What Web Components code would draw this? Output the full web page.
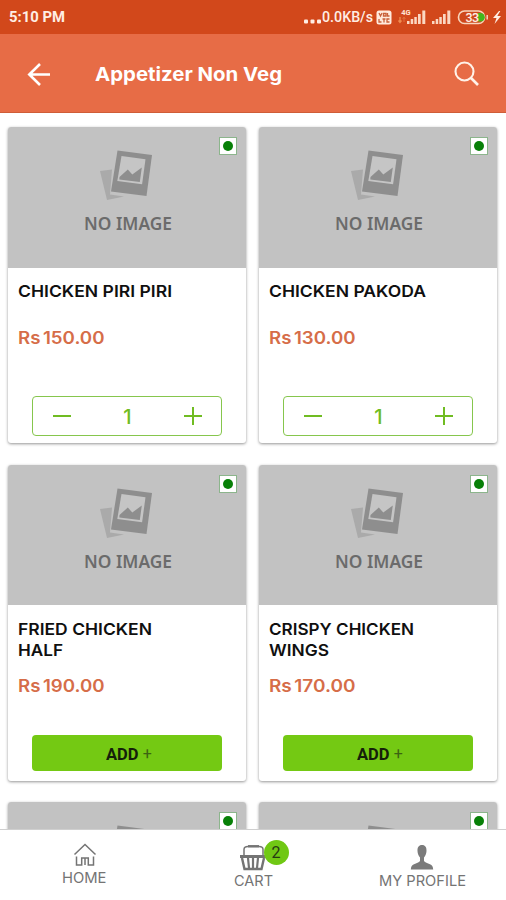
<!DOCTYPE html>
<html lang="en">
<head>
<meta charset="utf-8">
<title>Appetizer Non Veg</title>
<style>
html,body{margin:0;height:100%;overflow:hidden;background:#fff}
</style>
</head>
<body>
<menu-app></menu-app>
<script>
const define = (name, html, setup) => customElements.define(name, class extends HTMLElement {
  connectedCallback() {
    if (this.shadowRoot) return;
    const t = document.createElement('template');
    t.innerHTML = typeof html === 'function' ? html(this) : html;
    this.attachShadow({ mode: 'open' }).append(t.content.cloneNode(true));
    if (setup) setup(this);
  }
});

// A line of text widened or narrowed so that it spans the given width.
define('fit-text', `<style>:host{display:inline-block;white-space:nowrap}span{display:inline-block;transform-origin:0 50%}</style><span></span>`, el => {
  const s = el.shadowRoot.querySelector('span'), w = +el.getAttribute('w');
  s.textContent = el.getAttribute('text');
  const n = s.getBoundingClientRect().width;
  s.style.transform = `scaleX(${w / n})`;
  s.style.marginRight = (w - n) + 'px';
});

define('status-bar', `<style>
:host{display:flex;height:34px;background:#d2481b;color:#ffeee4;align-items:center;font:700 14.5px/34px Roboto,sans-serif;padding:2px 0 0 9px;box-sizing:border-box}
.sp{flex:1}svg{display:block;flex:none}
</style>
<fit-text w="56" text="5:10 PM"></fit-text><span class="sp"></span>
<svg width="18" height="34"><g fill="#ffeee4"><rect x="0" y="18.500" width="4" height="4" rx="1"/><rect x="6.500" y="18.500" width="4" height="4" rx="1"/><rect x="13" y="18.500" width="4" height="4" rx="1"/></g></svg>
<fit-text w="51" style="font-weight:500;margin:0 2px 0 0" text="0.0KB/s"></fit-text>
<svg width="131" height="34" viewBox="375 1 131 34">
<rect x="376.500" y="10.500" width="15" height="14" rx="2.500" fill="#ffeadd"/>
<g stroke="#c9603a" stroke-width="1.300" fill="none" transform="translate(0 .5)"><path d="M379 12.500l1.500 3 1.500-3M383.500 13h2.500v2.500h-2.500zM387.500 12.500v3h2M379 18.500v3h2.500M382.500 18.500h3M384 18.500v3.500M389.500 18.500h-2.500v3h2.500"/></g>
<text x="401.300" y="15" font-size="7.500" font-weight="700" fill="#ffe2d2">4G</text>
<path d="M400 17v5M398.500 20.500l1.500 2 1.500-2" stroke="#ef8c50" fill="none" stroke-width="1.300"/><path d="M404 22v-4M402.700 19l1.300-2 1.300 2" stroke="#e0703f" fill="none"/>
<g fill="#fbd8c2"><path d="M407 21h2.500v3H407zM410.700 19h2.500v5h-2.500zM414.300 17h2.500v7h-2.500zM418 14h2.700v10H418zM422.300 10.500h3V24h-3z"/><path d="M432 21h2.500v3H432zM435.700 19h2.500v5h-2.500zM439.300 17h2.500v7h-2.500zM443 14h2.700v10H443zM447.300 10.500h3V24h-3z"/></g>
<rect x="458.500" y="11" width="26" height="12.500" rx="6" fill="#cf481b" stroke="#f8d5bd" stroke-width="1.600"/><path d="M478 13h2.500a4.300 4.300 0 0 1 0 8.600H478z" fill="#43b61b"/><path d="M487.200 15v4.500" stroke="#f8d5bd" stroke-width="1.500"/>
<text x="465.500" y="22" font-size="12.500" font-weight="500" fill="#ffeee4" textLength="13.500">33</text>
<path d="M499 11l-6 7h3.500l-2 6 6.500-8h-3.700l3-5z" fill="#ffeee4"/></svg>`);

define('app-bar', `<style>
:host{display:flex;height:79px;box-sizing:border-box;background:#e76c46;border-bottom:1.500px solid #cf5d38;align-items:center;color:#fff;padding:2px 26px 0 27px;font:700 19px/24px Inter,sans-serif}
fit-text{margin-left:44px;flex:1;padding-top:1px}svg{display:block;margin-top:-1px}
</style>
<svg width="24" height="26" fill="none" stroke="#fff" stroke-width="2.600"><path d="M23 13.500H2M13 3 2.300 13.500 13 24"/></svg>
<fit-text w="187" text="Appetizer Non Veg"></fit-text>
<svg width="26" height="26" fill="none" stroke="#fff2e9" stroke-width="2.100"><circle cx="10.500" cy="10.500" r="9"/><path d="M17 17 24 24" stroke-width="2.600"/></svg>`);

define('no-image', el => `<style>
:host{display:block;position:relative;height:140.500px;background:#c2c2c2;border-radius:3px 3px 0 0;text-align:center;color:#6b6b6b;font:600 18px/24px "Noto Sans",sans-serif}
.pic{display:block;margin:0 auto;padding-top:22px}
fit-text{display:block;margin-top:10px;text-align:left;padding-left:75.500px}
.veg{position:absolute;right:9.500px;top:10px;width:18px;height:18px;box-sizing:border-box;border:1px solid #8cb58c;background:#fff;display:grid;place-items:center}
.veg::after{content:"";width:10px;height:10px;border-radius:50%;background:#078007}
</style>
<svg class="pic" width="56" height="52" viewBox="99 149 56 52">
<path d="M100 171l12-1.500-2 25 14 2-17 3.500z" fill="#aaa"/>
<path d="M117.500 150.500l34.500 4.500-5.500 41-35.500-4.500z" fill="#8e8e8e"/>
<path d="M121.500 156l24 3.200-3.400 25-24.800-3.200z" fill="#c5c5c5"/>
<path d="M119.500 177l8.300-7.500 4.500 5 9.500-7-2 14.500-20.500-2.500z" fill="#8e8e8e"/></svg>
${el.hasAttribute('plain') ? '' : '<fit-text w="88" text="NO IMAGE"></fit-text>'}<span class="veg"></span>`);

define('qty-stepper', `<style>
:host{display:flex;box-sizing:border-box;width:190px;height:40px;border:1.500px solid #86c64d;border-radius:4px;align-items:center;justify-content:space-between;padding:0 18px 0 19px;color:#70bc22;font:500 20px/36px Inter,sans-serif}
svg{display:block}span{padding-top:2px}
</style>
<svg width="20" height="20" stroke="#70bc22" stroke-width="2"><path d="M1 10h18"/></svg>
<span>1</span>
<svg width="20" height="20" stroke="#70bc22" stroke-width="2"><path d="M1 10h18M10 1v18"/></svg>`);

define('add-button', `<style>
:host{display:flex;width:190px;height:36.500px;border-radius:4px;background:#74c913;align-items:center;justify-content:center;gap:4px;color:#15200a;font:700 17px/36px Roboto,sans-serif;padding:2px 0 0 4px;box-sizing:border-box}
span{font-weight:400;font-size:16px;color:#3c6412}
</style><fit-text w="32.500" text="ADD"></fit-text><span>+</span>`);

define('menu-card', el => `<style>
:host{display:flex;flex-direction:column;height:316px;background:#fff;border-radius:3px;box-shadow:0 1px 3px rgba(0,0,0,.42);font-family:Inter,sans-serif;box-sizing:border-box}
.body{flex:1;display:flex;flex-direction:column;padding:13.500px 10px 0}
.name{font:600 16.300px/21px Inter,sans-serif;color:#101010;display:flex;flex-direction:column;align-items:flex-start}
.price{font:600 17px/22px Inter,sans-serif;word-spacing:-2px;color:#d66d48;margin-top:${(el.getAttribute('names') || '').includes('|') ? 14.5 : 25}px}
.act{margin-top:auto;display:flex;justify-content:center;padding-bottom:${el.hasAttribute('qty') ? 7 : 9.5}px}
</style>
${el.hasAttribute('names') ? `<no-image></no-image>
<div class="body"><div class="name">${el.getAttribute('names').split('|').map((n, i) => `<fit-text w="${el.getAttribute('ws').split('|')[i]}" text="${n}"></fit-text>`).join('')}</div>
<div class="price"><fit-text w="86.500" text="${el.getAttribute('price')}"></fit-text></div>
<div class="act"><slot></slot></div></div>` : '<no-image plain></no-image>'}`);

define('tab-item', el => `<style>
:host{display:flex;flex-direction:column;align-items:center;color:#747474;font:400 14px/18px Inter,sans-serif}
.icon{position:relative;display:block}
::slotted(svg){display:block}
</style><span class="icon"><slot></slot></span><fit-text w="${el.getAttribute('w')}" text="${el.getAttribute('label')}"></fit-text>`);

define('count-badge', `<style>
:host{position:absolute;left:24px;top:-1px;width:25px;height:25px;border-radius:50%;background:#70c814;color:#263b12;font:400 16px/26px Roboto,sans-serif;text-align:center}
</style><slot></slot>`);

define('tab-bar', `<style>
:host{display:grid;grid-template-columns:169px 169px 168px;height:71px;background:#fff;border-top:1px solid #cfcfcf;box-sizing:border-box;position:relative}
.home{padding-top:12px}.cart{padding-top:11px}.me{padding-top:13px}
</style>
<tab-item class="home" label="HOME" w="44.500"><svg width="24" height="27" viewBox="0 0 24 27" fill="none" stroke="#747474" stroke-width="1.500"><path d="M1.500 12.500 12 2.500l10.500 10M3.500 14.500V23h5.200v-7h6.600v7h5.200v-8.500M12 16v7"/></svg></tab-item>
<tab-item class="cart" label="CART" w="39"><svg width="28" height="31" viewBox="0 0 28 31" fill="none" stroke="#747474"><path d="M4 15V8.500Q4 5.500 8 5.500M23 15V8.500Q23 5.500 19 5.500" stroke-width="1.500"/><path d="M8 5.300h11" stroke-width="2.500"/><path d="M0 15.500h26" stroke-width="3"/><path d="M2 17l2.500 11h17L24 17" stroke-width="2.400"/><path d="M8 17l1 10M13 17v10M18 17l-1 10" stroke-width="2.200"/></svg><count-badge>2</count-badge></tab-item>
<tab-item class="me" label="MY PROFILE" w="87"><svg width="24" height="29" viewBox="0 0 24 29" fill="#7b7b7b"><path d="M12 2c3.300 0 4.700 2.500 4.500 6-.1 3-1.200 5-2.500 6.500v3.500c1 1.600 3.500 2 6 3.200 2 .9 3 2 3.200 5.300H.8C1 23.200 2 22.100 4 21.200c2.500-1.200 5-1.600 6-3.200v-3.500C8.700 13 7.600 11 7.500 8 7.300 4.500 8.700 2 12 2z"/></svg></tab-item>`);

define('menu-app', `<style>
:host{display:flex;flex-direction:column;width:506px;height:900px;overflow:hidden;background:#fff}
status-bar,app-bar,tab-bar{flex:none}
main{flex:1;min-height:0;overflow:hidden;display:grid;grid-template-columns:238px 238px;grid-auto-rows:316px;gap:21.500px 13px;padding:14px 9px 0 8px;align-content:start}
</style>
<status-bar></status-bar><app-bar></app-bar>
<main>
<menu-card qty names="CHICKEN PIRI PIRI" ws="154" price="Rs 150.00"><qty-stepper></qty-stepper></menu-card>
<menu-card qty names="CHICKEN PAKODA" ws="157" price="Rs 130.00"><qty-stepper></qty-stepper></menu-card>
<menu-card names="FRIED CHICKEN|HALF" ws="134|45" price="Rs 190.00"><add-button></add-button></menu-card>
<menu-card names="CRISPY CHICKEN|WINGS" ws="145|60" price="Rs 170.00"><add-button></add-button></menu-card>
<menu-card></menu-card>
<menu-card></menu-card>
</main>
<tab-bar></tab-bar>`);
</script>
</body>
</html>
